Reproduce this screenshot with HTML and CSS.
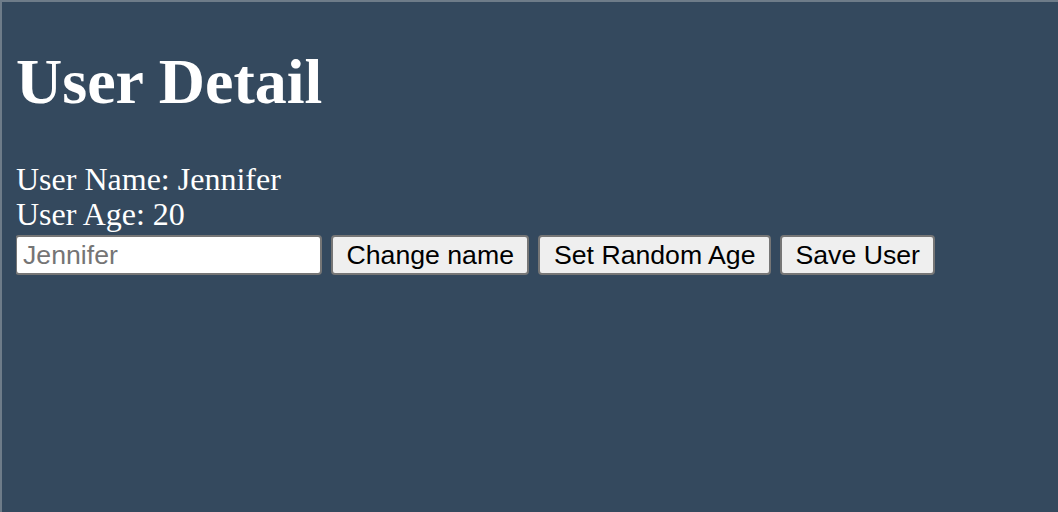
FILE: index.html
```html
<!DOCTYPE html>
<html lang="en">
<head>
<meta charset="utf-8">
<title>User Detail</title>
<link rel="stylesheet" href="styles.css">
</head>
<body>
<div class="user-detail">
  <h1 class="title">User Detail</h1>
  <div class="info">User Name: Jennifer</div>
  <div class="info">User Age: 20</div>
  <div class="controls">
    <input class="name-input" type="text" placeholder="Jennifer">
    <button class="btn" type="button">Change name</button>
    <button class="btn" type="button">Set Random Age</button>
    <button class="btn" type="button">Save User</button>
  </div>
</div>
</body>
</html>
```

FILE: styles.css
```css
html {
  height: 100%;
  box-sizing: border-box;
  background: #34495e;
  border-top: 2px solid #6e7c89;
  border-left: 2px solid #6e7c89;
}
body {
  margin: 0 0 0 14px;
  padding-top: 1px;
  color: #ffffff;
  font-family: "Liberation Serif", "Times New Roman", serif;
  font-size: 32px;
}
.user-detail {
  margin-top: -1px;
}
.title {
  font-size: 64px;
  font-weight: bold;
  margin: 43px 0 43px 0;
  line-height: normal;
}
.info {
  font-size: 32px;
  line-height: 35px;
}
.controls {
  display: flex;
  gap: 9px;
  margin: 3px 0 0 -1px;
}
.name-input {
  box-sizing: border-box;
  width: 307px;
  height: 40px;
  margin: 0;
  padding: 2px 6px;
  border: 2px solid #767676;
  border-radius: 4px;
  background: #ffffff;
  font-family: "Liberation Sans", Arial, sans-serif;
  font-size: 26.67px;
  color: #000;
}
.name-input::placeholder {
  color: #757575;
}
.btn {
  box-sizing: border-box;
  height: 40px;
  margin: 0;
  padding: 0 13.5px;
  border: 2px solid #767676;
  border-radius: 4px;
  background: #efefef;
  color: #000;
  font-family: "Liberation Sans", Arial, sans-serif;
  font-size: 26.67px;
}
```
